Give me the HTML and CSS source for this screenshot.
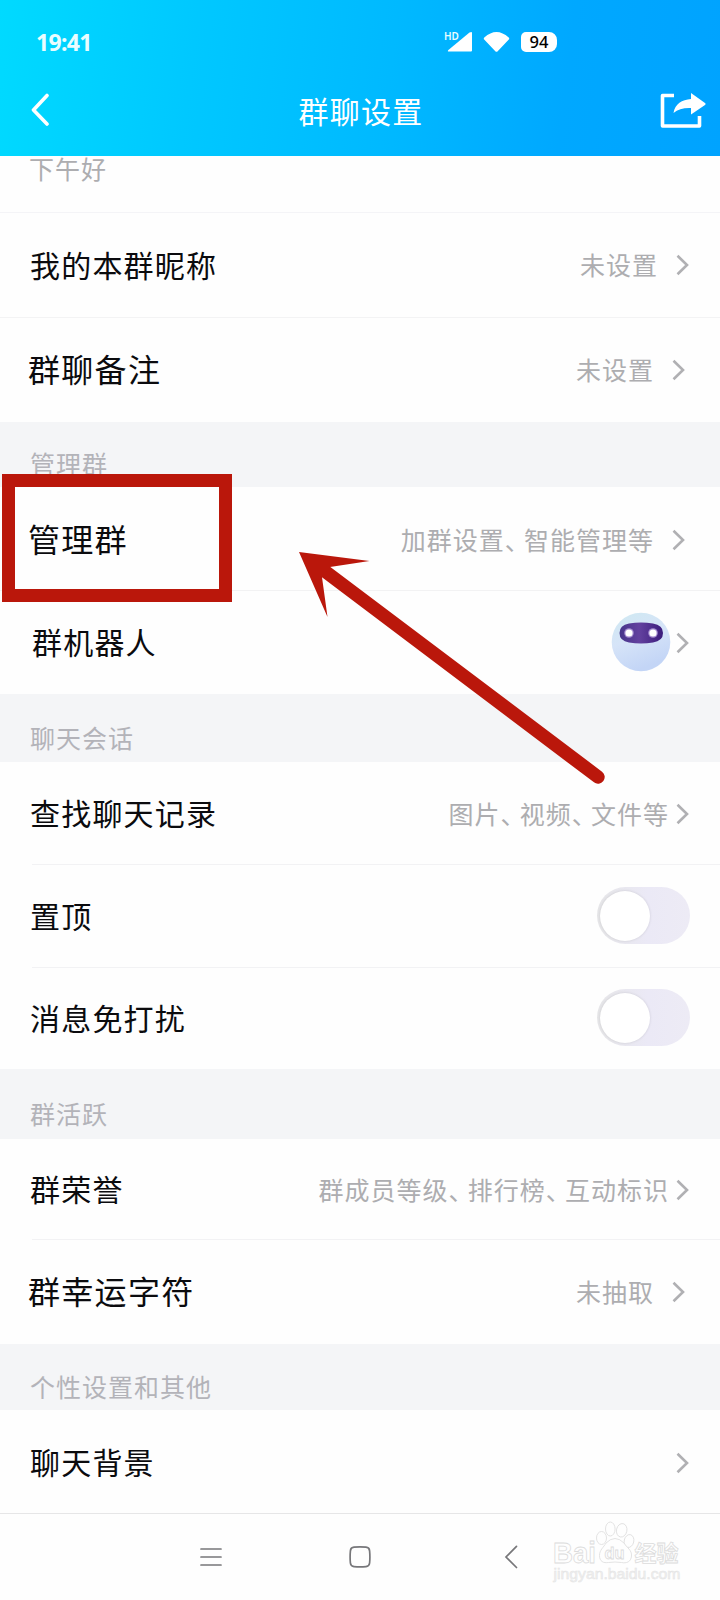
FILE: index.html
```
<!DOCTYPE html>
<html lang="zh-CN">
<head>
<meta charset="utf-8">
<title>群聊设置</title>
<link rel="stylesheet" href="styles.css">
</head>
<body>
<svg class="defs" width="0" height="0" aria-hidden="true">
  <symbol id="chevron" viewBox="0 0 13 22"><path d="M1.5 1.8 11 11 1.5 20.2" fill="none" stroke="#b0b0b3" stroke-width="2.600"/></symbol>
</svg>
<div class="screen">
  <header class="header">
    <div class="status">
      <span class="time">19:41</span>
      <div class="indicators">
        <svg class="signal" width="30" height="22" viewBox="0 0 30 22"><path d="M28 2v17.500q0 1-1 1H5q-2 0-.6-1.500L25.500 1.600Q28 0 28 2z" fill="#fff"/><text x="0" y="8.800" class="hd">HD</text></svg>
        <svg class="wifi" width="27" height="22" viewBox="0 0 27 22"><path d="M1.300 6.600Q13.500-4.500 25.700 6.600q1 1 .1 2L14.700 20.200q-1.200 1.200-2.400 0L1.200 8.600q-.9-1 .1-2z" fill="#fff"/></svg>
        <span class="battery">94</span>
      </div>
    </div>
    <div class="titlebar">
      <svg class="back" width="20" height="34" viewBox="0 0 20 34"><path d="M17 2.500 3.500 17 17 31" fill="none" stroke="#fff" stroke-width="3.600" stroke-linecap="round" stroke-linejoin="round"/></svg>
      <h1 class="title">群聊设置</h1>
      <svg class="share" width="48" height="40" viewBox="0 0 48 40"><path d="M16 5.500H4.500v30.500h37V26" fill="none" stroke="#fff" stroke-width="3.600" stroke-linejoin="round"/><path d="M33 3l14 10q1.200 1 0 2L33 24.500v-6.500q-11-.5-17.500 5C17 14 24 9.500 33 9z" fill="#fff"/></svg>
    </div>
  </header>

  <main>
    <div class="row greeting"><span class="value">下午好</span></div>
    <div class="row nickname"><span class="label">我的本群昵称</span><span class="value">未设置</span><svg class="chev"><use href="#chevron"/></svg></div>
    <div class="row remark large"><span class="label">群聊备注</span><span class="value">未设置</span><svg class="chev"><use href="#chevron"/></svg></div>

    <h2 class="section manage-head">管理群</h2>
    <div class="row manage large"><span class="label">管理群</span><span class="value">加群设置<i>、</i>智能管理等</span><svg class="chev"><use href="#chevron"/></svg></div>
    <div class="row robot"><span class="label">群机器人</span>
      <svg class="avatar" width="60" height="60" viewBox="0 0 60 60">
        <defs><linearGradient id="face" x1="0" y1="0" x2=".4" y2="1"><stop offset="0" stop-color="#cfe9f1"/><stop offset=".5" stop-color="#d6e4f8"/><stop offset="1" stop-color="#c3d5f6"/></linearGradient>
        <linearGradient id="visor"><stop offset="0" stop-color="#46358a"/><stop offset=".45" stop-color="#63419f"/><stop offset="1" stop-color="#3b1c7c"/></linearGradient></defs>
        <circle cx="30" cy="30" r="29.300" fill="url(#face)"/>
        <path d="M18 11.500Q30 9.500 42 11.500 52 13 52 21T42 30.500Q30 32.500 18 30.500 8.500 29 8.500 21T18 11.500z" fill="url(#visor)"/>
        <circle cx="18" cy="21" r="4.800" fill="#a48bd0"/><circle cx="42" cy="21" r="4.800" fill="#a48bd0"/>
        <circle cx="18" cy="21" r="3.600" fill="#fff"/><circle cx="42" cy="21" r="3.600" fill="#fff"/>
      </svg>
      <svg class="chev"><use href="#chevron"/></svg></div>

    <h2 class="section chat-head">聊天会话</h2>
    <div class="row search near inset"><span class="label">查找聊天记录</span><span class="value">图片<i>、</i>视频<i>、</i>文件等</span><svg class="chev"><use href="#chevron"/></svg></div>
    <div class="row pin inset"><span class="label">置顶</span><span class="toggle"></span></div>
    <div class="row mute"><span class="label">消息免打扰</span><span class="toggle"></span></div>

    <h2 class="section active-head">群活跃</h2>
    <div class="row honor near inset"><span class="label">群荣誉</span><span class="value">群成员等级<i>、</i>排行榜<i>、</i>互动标识</span><svg class="chev"><use href="#chevron"/></svg></div>
    <div class="row lucky large"><span class="label">群幸运字符</span><span class="value">未抽取</span><svg class="chev"><use href="#chevron"/></svg></div>

    <h2 class="section other-head">个性设置和其他</h2>
    <div class="row background"><span class="label">聊天背景</span><svg class="chev"><use href="#chevron"/></svg></div>
  </main>

  <nav class="nav">
    <svg width="24" height="24" viewBox="0 0 24 24"><path d="M2 4h20M2 12h20M2 20h20"/></svg>
    <svg width="24" height="24" viewBox="0 0 24 24"><path d="M5 2.200Q11 1.600 17 2.200q3.300.3 3.600 3.600Q21.200 12 20.600 18q-.3 3.300-3.600 3.600-6 .6-12 0Q1.700 21.300 1.400 18 .8 12 1.400 5.800 1.700 2.500 5 2.200z"/></svg>
    <svg width="24" height="24" viewBox="0 0 24 24"><path d="M17.500 1.300 7 12l10.500 10.500"/></svg>
  </nav>

  <div class="highlight"></div>
  <svg class="arrow" width="320" height="250" viewBox="290 545 320 250">
    <path d="M326 572 598 777" stroke="#ba170b" stroke-width="13.400" stroke-linecap="round"/>
    <path d="M299 552 369.500 561 330 567 322 577.300 327.500 617z" fill="#ba170b"/>
  </svg>
  <svg class="watermark" width="140" height="70" viewBox="545 1518 140 70">
    <g fill="#fefefe" stroke="#dcdcdc" stroke-width=".8">
      <text x="553" y="1562.500" font-size="29" font-weight="700" textLength="43" lengthAdjust="spacingAndGlyphs">Bai</text>
      <ellipse cx="601.500" cy="1538" rx="5" ry="6.500"/>
      <ellipse cx="610.300" cy="1529" rx="4.800" ry="7"/>
      <ellipse cx="621.700" cy="1530.300" rx="5.200" ry="6.800" transform="rotate(12 621.700 1530.300)"/>
      <ellipse cx="629" cy="1541" rx="4.800" ry="6.500" transform="rotate(12 629 1541)"/>
      <path d="M606 1543q9-9 18 0c3 5 8 7 7.500 13-.5 6-5 7.500-10 6.500q-6.500-1-13 0c-5 .8-9-1-9-7 0-5.500 4-8 6.500-12.500z"/>
      <text x="604.500" y="1559" font-size="17" font-weight="700" textLength="20" lengthAdjust="spacingAndGlyphs">du</text>
      <text x="634.500" y="1561" font-size="22" font-weight="700" textLength="44" class="cjk">经验</text>
    </g>
    <text x="553.500" y="1579" font-size="15" fill="#f1f1f1" stroke="#e4e4e4" stroke-width=".5" textLength="127" lengthAdjust="spacingAndGlyphs">jingyan.baidu.com</text>
  </svg>
</div>
</body>
</html>
```
FILE: styles.css
```
* { box-sizing: border-box; }

body {
  margin: 0;
  background: #fff;
  font-family: "Noto Sans CJK SC", "Noto Sans", sans-serif;
}

.defs { position: absolute; }

.screen {
  position: relative;
  width: 720px;
  height: 1600px;
  overflow: hidden;
  background: #fefefe;
}

/* Header */
.header {
  height: 156px;
  background: linear-gradient(97deg, #00daff 0%, #00c8ff 27%, #00b9ff 54%, #00a8ff 78%, #00a3ff 100%);
  color: #fff;
}

.status {
  display: flex;
  align-items: center;
  height: 84px;
  padding-left: 36px;
}

.time {
  width: 408px;
  font: 700 23px/30px "Noto Sans", sans-serif;
  letter-spacing: -0.7px;
  color: #e9fdff;
}

.indicators { display: flex; align-items: center; }
.wifi { margin-left: 9px; }
.hd { font: 600 10px "Noto Sans", sans-serif; fill: #e9fdff; }

.battery {
  width: 36px;
  height: 20px;
  margin-left: 11px;
  border-radius: 5px 8px 8px 5px;
  background: #fff;
  color: #000;
  font: 500 16.5px/20px "Noto Sans", sans-serif;
  text-align: center;
}

.titlebar {
  display: flex;
  align-items: center;
  justify-content: space-between;
  height: 52px;
  padding: 0 14px 0 30px;
}

.back { margin-top: -1px; }

.title {
  margin: 0 0 0 14px;
  font-size: 30px;
  font-weight: 400;
  line-height: 40px;
  letter-spacing: 1.2px;
}

/* List */
.row {
  display: flex;
  align-items: center;
  height: 103px;
  padding: 0 31px 0 30px;
}

.label {
  margin: -3px auto 0 0;
  font-size: 30px;
  line-height: 40px;
  letter-spacing: 1.2px;
  color: #0b0b0e;
}

.value {
  margin-top: -2px;
  font-size: 25px;
  line-height: 34px;
  letter-spacing: 1px;
  color: #adadb0;
  white-space: nowrap;
}

/* Half-width enumeration comma */
.value i {
  margin-right: 5.7px;
  font-style: normal;
  font-feature-settings: "halt";
}

.chev {
  flex: none;
  width: 13px;
  height: 22px;
  margin-left: 18px;
}

.near .chev { margin-left: 7px; }

.large { padding-left: 28px; padding-right: 35px; }
.large .label { font-size: 32px; letter-spacing: 1.3px; }

.greeting { align-items: flex-start; height: 57px; padding-left: 29px; border-bottom: 1px solid #f4f4f7; }
.greeting .value { margin-top: -5px; }
.nickname { height: 105px; border-bottom: 1px solid #f3f3f4; }
.remark { height: 104px; }
.remark .label { margin-top: -5px; }
.manage { height: 104px; padding-top: 2px; border-bottom: 1px solid #f2f2f3; }
.manage .label { margin-top: -4px; }
.robot { padding-left: 32px; }
.robot .chev { margin-left: 5px; }
.mute { height: 101px; }
.honor { height: 101px; }
.lucky { height: 104px; }
.lucky .label { margin-top: -4px; }
.background { height: 104px; padding-top: 2px; border-bottom: 1px solid #e6e6e7; }

.inset {
  background: linear-gradient(#f2f2f4, #f2f2f4) 32px 100% / 100% 1px no-repeat;
}

.section {
  height: 67px;
  margin: 0;
  padding: 26px 0 0 30px;
  background: #f4f5f7;
  font-size: 25px;
  font-weight: 400;
  line-height: 34px;
  letter-spacing: 1px;
  color: #b3b3b9;
}

.manage-head { height: 65px; padding-top: 24px; }
.chat-head { height: 68px; }
.active-head { height: 70px; padding-top: 27px; }
.other-head { height: 66px; padding-top: 25px; }

.avatar { flex: none; margin-top: -1px; }

.toggle {
  width: 93px;
  height: 57px;
  margin: -2px -1px 0 0;
  padding: 4px 3px;
  border-radius: 29px;
  background: linear-gradient(90deg, #e6e6e8, #ebe9f6 55%, #edebf5);
}

.toggle::before {
  content: "";
  display: block;
  width: 50px;
  height: 50px;
  border-radius: 50%;
  background: #fff;
  box-shadow: 0 0 3px rgba(0, 0, 0, 0.12);
}

/* System navigation */
.nav {
  display: flex;
  justify-content: space-between;
  height: 86px;
  padding: 31px 197px 0 199px;
}

.nav path { fill: none; stroke: #77777a; stroke-width: 1.7; stroke-linecap: round; }

/* Annotations over the list */
.highlight {
  position: absolute;
  left: 2px;
  top: 474px;
  width: 230px;
  height: 128px;
  border: 13px solid #ba170b;
}

.arrow { position: absolute; left: 290px; top: 545px; }

.watermark {
  position: absolute;
  left: 545px;
  top: 1518px;
  font-family: "Liberation Sans", sans-serif;
}

.cjk { font-family: "Noto Sans CJK SC", sans-serif; }
```
